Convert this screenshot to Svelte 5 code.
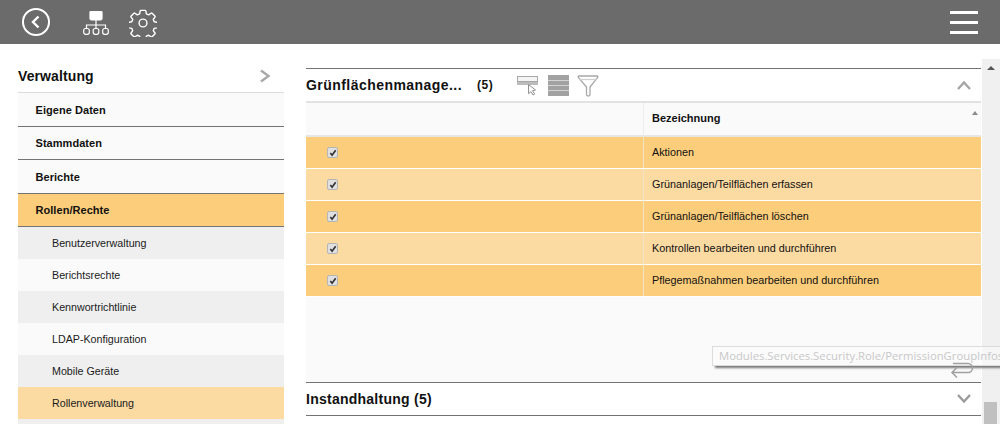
<script>
  const primary = [
    { label: 'Eigene Daten', tall: true },
    { label: 'Stammdaten', tall: false },
    { label: 'Berichte', tall: true }
  ];
  const sub = ['Benutzerverwaltung', 'Berichtsrechte', 'Kennwortrichtlinie', 'LDAP-Konfiguration', 'Mobile Geräte'];
  const rows = ['Aktionen', 'Grünanlagen/Teilflächen erfassen', 'Grünanlagen/Teilflächen löschen', 'Kontrollen bearbeiten und durchführen', 'Pflegemaßnahmen bearbeiten und durchführen'];
</script>

<div class="page">
  <header class="top">
    <div class="top-left">
      <svg class="back" width="30" height="30" viewBox="0 0 30 30" fill="none" stroke="#fff">
        <circle cx="15" cy="15" r="13" stroke-width="2"/>
        <path d="M17.5 9.5 12 15l5.500 5.500" stroke-width="2.400"/>
      </svg>
      <svg class="tree" width="26" height="24" viewBox="0 0 26 24" fill="none" stroke="#fff" stroke-width="1.200">
        <rect x="7" y="0" width="12" height="9" rx="1.500" fill="#fff"/>
        <path d="M13 9v8M3.500 17v-3h19v3"/>
        <rect x="0.700" y="17.500" width="5.600" height="5.800" rx="2"/>
        <rect x="10.200" y="17.500" width="5.600" height="5.800" rx="2"/>
        <rect x="19.700" y="17.500" width="5.600" height="5.800" rx="2"/>
      </svg>
      <svg class="gear" width="28" height="28" viewBox="0 0 30 30" fill="none" stroke="#fff" stroke-width="1.500" stroke-linejoin="round">
        <path d="M12.800 1.500h4.400c.5 0 .8.3.9.8l.5 3 2.500 1 2.500-1.800c.4-.3.8-.2 1.100.1l3 3c.3.3.4.7.1 1.100l-1.800 2.500 1 2.500 3 .5c.5.1.8.4.8.9v4.200c0 .5-.3.8-.8.9l-3 .5-1 2.500 1.800 2.500c.3.4.2.8-.1 1.100l-3 3c-.3.3-.7.4-1.100.1l-2.500-1.800-2.500 1-.5 3c-.1.5-.4.8-.9.8h-4.400c-.5 0-.8-.3-.9-.8l-.5-3-2.500-1-2.500 1.800c-.4.3-.8.2-1.100-.1l-3-3c-.3-.3-.4-.7-.1-1.100l1.800-2.500-1-2.500-3-.5c-.5-.1-.8-.4-.8-.9v-4.200c0-.5.3-.8.8-.9l3-.5 1-2.500-1.800-2.500c-.3-.4-.2-.8.1-1.100l3-3c.3-.3.7-.4 1.100-.1l2.500 1.800 2.500-1 .5-3c.1-.5.4-.8.9-.8z"/>
        <circle cx="15" cy="15" r="4.200"/>
      </svg>
    </div>
    <div class="burger"><span></span><span></span><span></span></div>
  </header>

  <div class="body">
    <aside class="side">
      <div class="side-head">
        <span>Verwaltung</span>
        <svg width="12" height="14" viewBox="0 0 12 14" fill="none" stroke="#a9a9a9" stroke-width="2.400"><path d="M2 1.500 9.500 7 2 12.500"/></svg>
      </div>
      {#each primary as item}
        <div class="nav" class:tall={item.tall}>{item.label}</div>
      {/each}
      <div class="nav active">Rollen/Rechte</div>
      {#each sub as item, i}
        <div class="subnav" class:odd={i % 2 === 0}>{item}</div>
      {/each}
      <div class="subnav current">Rollenverwaltung</div>
      <div class="subnav odd"></div>
    </aside>

    <main class="main">
      <section class="panel-head">
        <strong class="title">Grünflächenmanage...</strong>
        <strong class="count">(5)</strong>
        <svg class="tool pick" width="22" height="20" viewBox="0 0 22 20" fill="none">
          <rect x="0.500" y="0.500" width="20" height="5" stroke="#a8a8a8" fill="#f4f4f4"/>
          <rect x="0" y="6" width="21" height="3" fill="#bcbcbc"/>
          <path d="M11.500 8.500l7 5.500-3 .7 2.200 3.300-1.700 1-2.100-3.400-2.300 2.100z" fill="#fff" stroke="#8f8f8f"/>
        </svg>
        <svg class="tool stack" width="21" height="21" viewBox="0 0 21 21">
          <rect width="21" height="21" fill="#a2a2a2"/>
          <path d="M0 5.500h21M0 10.500h21M0 15.500h21" stroke="#d4d4d4"/>
        </svg>
        <svg class="tool funnel" width="22" height="22" viewBox="0 0 22 22" fill="none" stroke="#a8a8a8" stroke-width="1.300" stroke-linejoin="round">
          <path d="M2 1h18c.8 0 1.200.7.700 1.300L13 12v7.500c0 2-3.500 2-3.500 0V12L1.300 2.300C.8 1.700 1.200 1 2 1z"/>
          <path d="M2.500 4.500h17" stroke="#d0d0d0"/>
        </svg>
        <svg class="chev" width="14" height="10" viewBox="0 0 14 10" fill="none" stroke="#a5a5a5" stroke-width="2.400"><path d="M1 9l6-6.500L13 9"/></svg>
      </section>

      <div class="table">
        <div class="row thead">
          <div class="c1"></div>
          <div class="c2"><b>Bezeichnung</b><i class="sort"></i></div>
        </div>
        {#each rows as row, i}
          <div class="row" class:alt={i % 2 === 1}>
            <div class="c1"><span class="check"><svg width="8" height="8" viewBox="0 0 9 9" fill="none" stroke="#333" stroke-width="1.900"><path d="M1.500 4.500 3.500 7 7.500 1.500"/></svg></span></div>
            <div class="c2">{row}</div>
          </div>
        {/each}
        <div class="fill">
          <div class="tip">Modules.Services.Security.Role/PermissionGroupInfos</div>
          <svg class="undo" width="24" height="16" viewBox="0 0 24 16" fill="none" stroke="#a0a0a0" stroke-width="1.500"><path d="M3 1.500H18a4.500 4.500 0 0 1 0 9H2M7 5.500l-5 5 5 5"/></svg>
        </div>
      </div>

      <section class="panel-foot">
        <strong class="title narrow">Instandhaltung (5)</strong>
        <svg class="chev" width="14" height="10" viewBox="0 0 14 10" fill="none" stroke="#9a9a9a" stroke-width="2.400"><path d="M1 1l6 6.500L13 1"/></svg>
      </section>
    </main>

    <div class="scroll">
      <i class="up"></i>
      <div class="thumb"></div>
    </div>
  </div>
</div>

<style>
  :global(body) { margin: 0; background: #fff; }
  .page { width: 1000px; height: 424px; overflow: hidden; font-family: "Liberation Sans", Arial, sans-serif; color: #111; position: relative; }
  .top { height: 44px; background: #6b6b6b; display: flex; align-items: center; justify-content: space-between; }
  .top-left { display: flex; align-items: center; padding-left: 20.500px; }
  .back { display: block; }
  .tree { margin-left: 32.500px; margin-top: 2px; }
  .gear { margin-left: 20px; margin-top: 1px; }
  .burger { width: 28px; margin-right: 22px; display: flex; flex-direction: column; gap: 7px; }
  .burger span { height: 3px; background: #fff; }
  .body { display: flex; height: 380px; }
  .side { width: 266px; margin-left: 18px; padding-top: 16px; flex: none; }
  .side-head { height: 32px; display: flex; align-items: center; justify-content: space-between; padding-right: 13px; font-size: 14px; font-weight: bold; border-bottom: 1px solid #ddd; letter-spacing: .1px; }
  .nav { height: 32px; background: #fafafa; border-bottom: 1px solid #737373; padding-left: 17.500px; display: flex; align-items: center; font-size: 11px; font-weight: bold; letter-spacing: .05px; }
  .nav.tall { height: 33px; }
  .nav.active { background: #fccd7a; }
  .subnav { height: 32px; padding-left: 34px; display: flex; align-items: center; font-size: 10.700px; background: #fafafa; color: #1a1a1a; }
  .subnav.odd { background: #efefef; }
  .subnav.current { background: #fcdba3; }
  .main { width: 675px; margin-left: 22px; padding-top: 24px; flex: none; }
  .panel-head { height: 33px; border-top: 1px solid #737373; display: flex; align-items: center; position: relative; box-sizing: border-box; }
  .title { font-size: 14px; letter-spacing: .45px; }
  .title.narrow { letter-spacing: .25px; }
  .count { font-size: 12px; margin-left: 15px; letter-spacing: .5px; }
  .tool { flex: none; margin-top: 1px; }
  .pick { margin-left: 24px; }
  .stack { margin-left: 9px; }
  .funnel { margin-left: 8px; }
  .chev { position: absolute; right: 10px; }
  .table { border-top: 2px solid #e2e2e2; background: #fafafa; }
  .row { height: 31px; display: flex; background: #fccd7a; border-bottom: 1px solid #fff; font-size: 10.800px; }
  .row.alt { background: #fcdba3; }
  .row.thead { height: 32px; background: #fafafa; border-bottom: 2px solid #e6e6e6; font-size: 11px; }
  .c1 { width: 338px; border-right: 1px solid #f1e3c4; display: flex; align-items: center; padding-left: 21px; box-sizing: border-box; }
  .thead .c1 { border-right-color: #eee; }
  .c2 { flex: 1; padding: 0 0 2px 8px; display: flex; align-items: center; position: relative; }
  .sort { position: absolute; right: 3px; top: 8px; border: 3px solid transparent; border-bottom: 4px solid #8a8a8a; border-top: 0; }
  .check { width: 9px; height: 9px; background: #e0e0e0; border: 1px solid #b5b5b5; border-radius: 2px; display: flex; align-items: center; justify-content: center; }
  .fill { height: 85px; position: relative; }
  .tip { position: absolute; left: 406px; top: 49px; width: 300px; height: 20px; line-height: 18px; box-sizing: border-box; padding-left: 6px; font-family: "Open Sans", sans-serif; font-size: 11.300px; color: #c8c8c8; background: rgba(252, 252, 252, .55); border: 1px solid #dcdcdc; box-shadow: 3px 2px 2px #777; white-space: nowrap; overflow: hidden; z-index: 2; }
  .undo { position: absolute; right: 7px; bottom: 4px; z-index: 3; }
  .panel-foot { height: 32px; border-top: 1px solid #737373; border-bottom: 1px solid #737373; display: flex; align-items: center; position: relative; }
  .scroll { width: 18px; margin-left: 1px; margin-top: 15px; background: #f0f0f0; position: relative; flex: none; }
  .up { position: absolute; left: 5px; top: 7px; border: 4px solid transparent; border-bottom: 4px solid #555; border-top: 0; }
  .thumb { position: absolute; left: 2px; bottom: 0; width: 13px; height: 22px; background: #c0c0c0; }
</style>
